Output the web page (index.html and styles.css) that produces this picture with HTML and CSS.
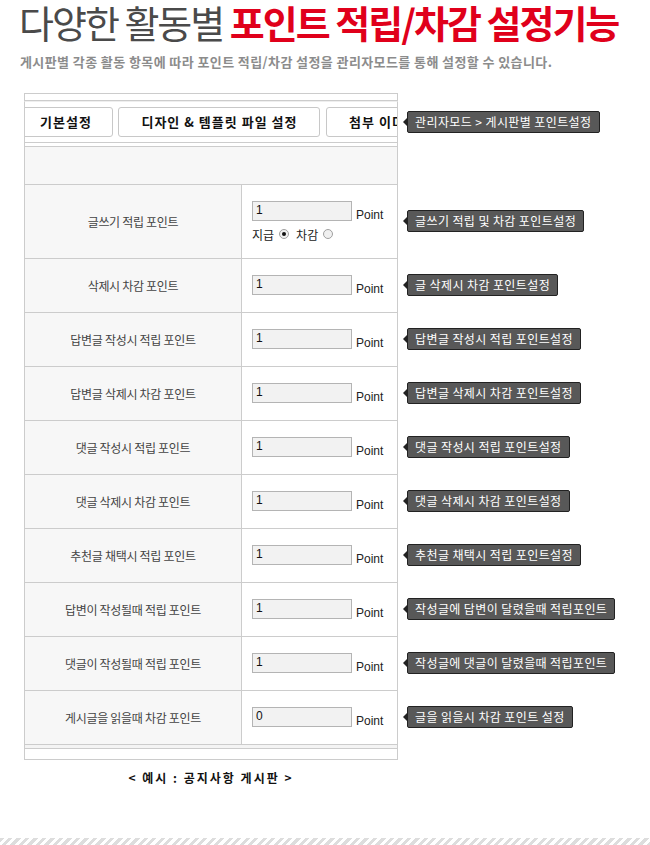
FILE: index.html
```html
<html>
    <head>
        <meta charset="utf-8">
        <link rel="stylesheet" href="styles.css">
    </head>
    <body>
        <h1 class="title">다양한 활동별 <b>포인트 적립/차감 설정기능</b></h1>
        <p class="sub">게시판별 각종 활동 항목에 따라 포인트 적립/차감 설정을 관리자모드를 통해 설정할 수 있습니다.</p>

        <div class="board">
            <div class="line"><div class="box edge"></div></div>
            <div class="line">
                <div class="box tabs">
                    <span class="tab first">기본설정</span>
                    <span class="tab">디자인 &amp; 템플릿 파일 설정</span>
                    <span class="tab">첨부 이미지 설정</span>
                </div>
                <div class="tip">관리자모드 &gt; 게시판별 포인트설정</div>
            </div>
            <div class="line"><div class="box gap"></div></div>
            <div class="line"><div class="box shade"></div></div>

            <div class="line">
                <div class="box row tall">
                    <div class="name">글쓰기 적립 포인트</div>
                    <div class="val">
                        <div class="entry"><span class="field">1</span><span class="unit">Point</span></div>
                        <div class="pick">지급 <span class="radio on"></span> 차감 <span class="radio"></span></div>
                    </div>
                </div>
                <div class="tip">글쓰기 적립 및 차감 포인트설정</div>
            </div>
            <div class="line">
                <div class="box row">
                    <div class="name">삭제시 차감 포인트</div>
                    <div class="val"><div class="entry"><span class="field">1</span><span class="unit">Point</span></div></div>
                </div>
                <div class="tip">글 삭제시 차감 포인트설정</div>
            </div>
            <div class="line">
                <div class="box row">
                    <div class="name">답변글 작성시 적립 포인트</div>
                    <div class="val"><div class="entry"><span class="field">1</span><span class="unit">Point</span></div></div>
                </div>
                <div class="tip">답변글 작성시 적립 포인트설정</div>
            </div>
            <div class="line">
                <div class="box row">
                    <div class="name">답변글 삭제시 차감 포인트</div>
                    <div class="val"><div class="entry"><span class="field">1</span><span class="unit">Point</span></div></div>
                </div>
                <div class="tip">답변글 삭제시 차감 포인트설정</div>
            </div>
            <div class="line">
                <div class="box row">
                    <div class="name">댓글 작성시 적립 포인트</div>
                    <div class="val"><div class="entry"><span class="field">1</span><span class="unit">Point</span></div></div>
                </div>
                <div class="tip">댓글 작성시 적립 포인트설정</div>
            </div>
            <div class="line">
                <div class="box row">
                    <div class="name">댓글 삭제시 차감 포인트</div>
                    <div class="val"><div class="entry"><span class="field">1</span><span class="unit">Point</span></div></div>
                </div>
                <div class="tip">댓글 삭제시 차감 포인트설정</div>
            </div>
            <div class="line">
                <div class="box row">
                    <div class="name">추천글 채택시 적립 포인트</div>
                    <div class="val"><div class="entry"><span class="field">1</span><span class="unit">Point</span></div></div>
                </div>
                <div class="tip">추천글 채택시 적립 포인트설정</div>
            </div>
            <div class="line">
                <div class="box row">
                    <div class="name">답변이 작성될때 적립 포인트</div>
                    <div class="val"><div class="entry"><span class="field">1</span><span class="unit">Point</span></div></div>
                </div>
                <div class="tip">작성글에 답변이 달렸을때 적립포인트</div>
            </div>
            <div class="line">
                <div class="box row">
                    <div class="name">댓글이 작성될때 적립 포인트</div>
                    <div class="val"><div class="entry"><span class="field">1</span><span class="unit">Point</span></div></div>
                </div>
                <div class="tip">작성글에 댓글이 달렸을때 적립포인트</div>
            </div>
            <div class="line">
                <div class="box row">
                    <div class="name">게시글을 읽을때 차감 포인트</div>
                    <div class="val"><div class="entry"><span class="field">0</span><span class="unit">Point</span></div></div>
                </div>
                <div class="tip">글을 읽을시 차감 포인트 설정</div>
            </div>

            <div class="line"><div class="box foot1"></div></div>
            <div class="line"><div class="box foot2"></div></div>

            <p class="caption">&lt; 예시 : 공지사항 게시판 &gt;</p>
        </div>

        <div class="stripe"></div>
    </body>
</html>
```

FILE: styles.css
```css
body {
    margin: 0;
    width: 650px;
    font-family: "Noto Sans CJK KR", "Liberation Sans", sans-serif;
    color: #444444;
    background-color: #FFFFFF;
}

.title {
    margin: 0;
    padding: 0 0 0 19px;
    font-size: 38px;
    line-height: 44px;
    font-weight: 400;
    letter-spacing: -2px;
    color: #4a4a4a;
    white-space: nowrap;
}

.title b {
    color: #e0001b;
    font-weight: 700;
}

.sub {
    margin: 9px 0 0 20px;
    font-size: 13px;
    line-height: 18px;
    font-weight: 700;
    letter-spacing: 0.4px;
    color: #8c8c8c;
    white-space: nowrap;
}

.board {
    margin: 22px 0 0 24px;
}

.line {
    display: flex;
    align-items: center;
}

.box {
    width: 374px;
    box-sizing: border-box;
    border-left: 1px solid #cccccc;
    border-right: 1px solid #cccccc;
    flex-shrink: 0;
}

.edge {
    height: 8px;
    border-top: 1px solid #cccccc;
    border-bottom: 1px solid #cccccc;
}

.tabs {
    height: 41px;
    padding-top: 5px;
    white-space: nowrap;
    overflow: hidden;
    border-top: 1px solid #eeeeee;
}

.tab {
    display: inline-block;
    box-sizing: border-box;
    height: 30px;
    line-height: 28px;
    padding: 0 22px;
    margin-right: 2px;
    border: 1px solid #c8c8c8;
    border-radius: 3px;
    font-size: 13px;
    font-weight: 700;
    color: #111111;
    letter-spacing: 1px;
}

.tab.first {
    margin-left: -6px;
    padding: 0 20px;
}

.gap {
    height: 5px;
    border-top: 1px solid #cccccc;
    border-bottom: 1px solid #cccccc;
}

.shade {
    height: 37px;
    background-color: #f7f7f7;
}

.row {
    display: flex;
    height: 54px;
    border-top: 1px solid #cccccc;
}

.row.tall {
    height: 74px;
}

.name {
    width: 216px;
    flex-shrink: 0;
    display: flex;
    align-items: center;
    justify-content: center;
    background-color: #f7f7f7;
    border-right: 1px solid #cccccc;
    font-size: 12px;
    letter-spacing: -0.3px;
    color: #444444;
}

.val {
    flex: 1;
    display: flex;
    flex-direction: column;
    justify-content: center;
    padding-left: 10px;
    font-size: 12px;
    white-space: nowrap;
}

.entry {
    display: flex;
    align-items: flex-start;
}

.field {
    display: inline-block;
    box-sizing: border-box;
    width: 100px;
    height: 20px;
    padding: 0 3px;
    line-height: 17px;
    background-color: #f2f2f2;
    border: 1px solid #b4b4b4;
    font-family: "Liberation Sans", sans-serif;
    font-size: 12px;
    color: #111111;
}

.unit {
    display: inline-block;
    margin-left: 4px;
    padding-top: 7px;
    font-family: "Liberation Sans", sans-serif;
    font-size: 12px;
    color: #222222;
}

.pick {
    display: flex;
    align-items: center;
    margin-top: 4px;
    font-size: 12px;
    color: #222222;
}

.radio {
    display: inline-block;
    box-sizing: border-box;
    width: 10px;
    height: 10px;
    margin: 0 7px 0 5px;
    border: 1px solid #a0a0a0;
    border-radius: 50%;
    background-color: #f0f0f0;
    position: relative;
}

.radio.on::after {
    content: "";
    position: absolute;
    left: 2px;
    top: 2px;
    width: 4px;
    height: 4px;
    border-radius: 50%;
    background-color: #111111;
}

.tip {
    position: relative;
    margin-left: 9px;
    height: 22px;
    box-sizing: border-box;
    padding: 0 7px;
    line-height: 20px;
    background-color: #585858;
    border: 1px solid #222222;
    border-radius: 2px;
    color: #FFFFFF;
    font-size: 12px;
    letter-spacing: 0.4px;
    white-space: nowrap;
}

.tip::before {
    content: "";
    position: absolute;
    left: -5px;
    top: 6px;
    border-style: solid;
    border-width: 4px 4px 4px 0;
    border-color: transparent #222222 transparent transparent;
}

.foot1 {
    height: 5px;
    border-top: 1px solid #cccccc;
    border-bottom: 1px solid #cccccc;
    background-color: #f4f4f4;
}

.foot2 {
    height: 11px;
    border-bottom: 1px solid #cccccc;
}

.caption {
    width: 374px;
    margin: 9px 0 0 0;
    text-align: center;
    font-size: 12px;
    font-weight: 700;
    color: #111111;
    letter-spacing: 2px;
}

.stripe {
    margin-top: 52px;
    height: 7px;
    background: repeating-linear-gradient(135deg, #dddddd 0 3px, #FFFFFF 3px 6px);
}
```
